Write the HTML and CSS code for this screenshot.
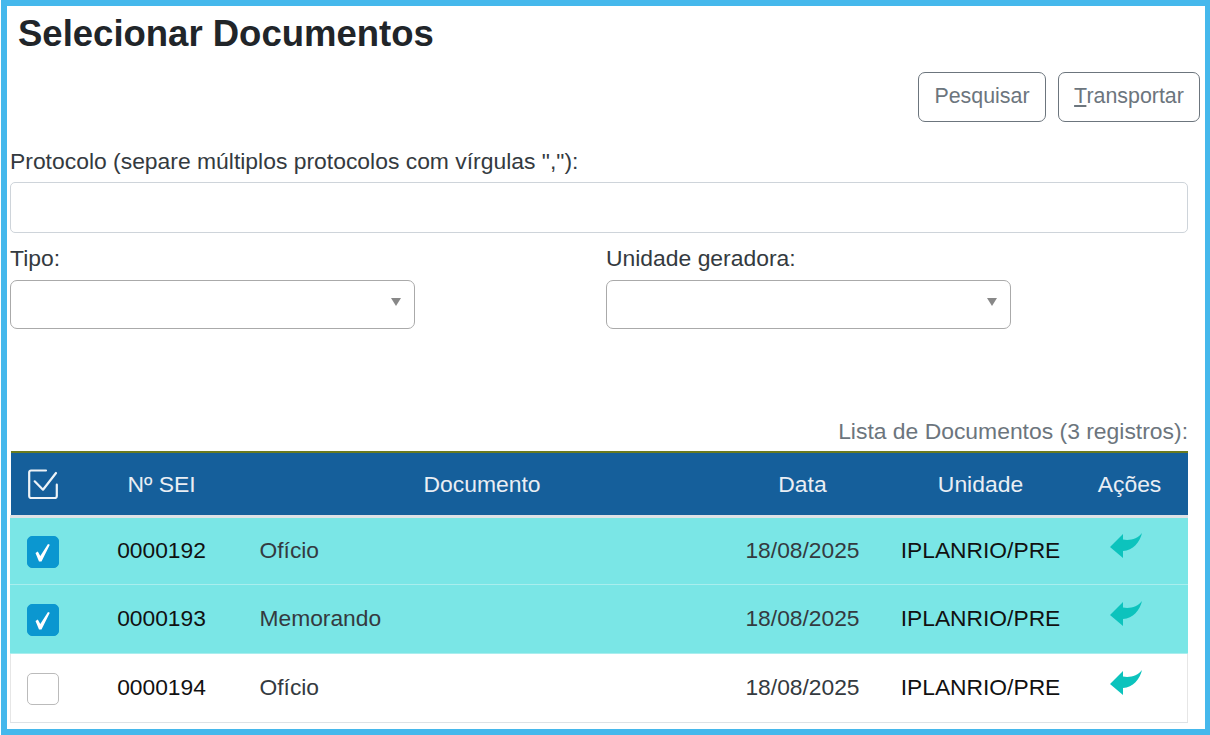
FILE: index.html
```html
<!DOCTYPE html>
<html lang="pt-BR">
<head>
<meta charset="utf-8">
<title>Selecionar Documentos</title>
<link rel="stylesheet" href="styles.css">
</head>
<body>
<svg class="defs" width="0" height="0" aria-hidden="true">
  <symbol id="arrow" viewBox="0 0 32 26"><path d="M0 14 13 1v5.500c7 1.500 15-1 19-6.500-2 9-9 17.500-19 18V25z"/></symbol>
  <symbol id="tick" viewBox="0 0 32 32"><path d="M8.500 17l2.300-1.500 2.500 4.500L21 8l1.800.8L14.500 25.500H12z"/></symbol>
</svg>
<main class="frame">
  <h1 class="title">Selecionar Documentos</h1>
  <div class="actions">
    <button class="btn" type="button">Pesquisar</button>
    <button class="btn btn-wide" type="button"><u>T</u>ransportar</button>
  </div>
  <label class="label label-proto" for="proto">Protocolo (separe múltiplos protocolos com vírgulas ","):</label>
  <input class="input" id="proto" type="text">
  <div class="filters">
    <div class="filter">
      <div class="label">Tipo:</div>
      <div class="select"><span class="caret"></span></div>
    </div>
    <div class="filter">
      <div class="label">Unidade geradora:</div>
      <div class="select"><span class="caret"></span></div>
    </div>
  </div>
  <div class="caption">Lista de Documentos (3 registros):</div>
  <table class="table">
    <colgroup>
      <col class="c1"><col class="c2"><col class="c3"><col class="c4"><col class="c5"><col class="c6">
    </colgroup>
    <thead>
      <tr>
        <th><svg class="all" viewBox="0 0 30 30" fill="none" stroke="#eef3f7" stroke-width="2.200" stroke-linecap="round" stroke-linejoin="round"><path d="M18 1.500H3A1.800 1.800 0 0 0 1.200 3.300v24A1.800 1.800 0 0 0 3 29h24a1.800 1.800 0 0 0 1.800-1.700V15.700"/><path d="M6.700 12.300 15 20.700 28 4"/></svg></th>
        <th>Nº SEI</th><th>Documento</th><th>Data</th><th>Unidade</th><th>Ações</th>
      </tr>
    </thead>
    <tbody>
      <tr class="sel">
        <td class="ctr"><span class="box on"><svg class="tick"><use href="#tick"/></svg></span></td>
        <td class="ctr num">0000192</td><td class="doc">Ofício</td><td class="ctr date">18/08/2025</td><td class="ctr unit">IPLANRIO/PRE</td>
        <td class="ctr act"><svg class="arrow"><use href="#arrow"/></svg></td>
      </tr>
      <tr class="sel">
        <td class="ctr"><span class="box on"><svg class="tick"><use href="#tick"/></svg></span></td>
        <td class="ctr num">0000193</td><td class="doc">Memorando</td><td class="ctr date">18/08/2025</td><td class="ctr unit">IPLANRIO/PRE</td>
        <td class="ctr act"><svg class="arrow"><use href="#arrow"/></svg></td>
      </tr>
      <tr class="plain">
        <td class="ctr"><span class="box"></span></td>
        <td class="ctr num">0000194</td><td class="doc">Ofício</td><td class="ctr date">18/08/2025</td><td class="ctr unit">IPLANRIO/PRE</td>
        <td class="ctr act"><svg class="arrow"><use href="#arrow"/></svg></td>
      </tr>
    </tbody>
  </table>
</main>
</body>
</html>
```
FILE: styles.css
```css
* { box-sizing: border-box; }
html, body { margin: 0; padding: 0; background: #fff; }
body { width: 1210px; height: 735px; overflow: hidden; padding-left: 1px; font-family: "Liberation Sans", Arial, sans-serif; color: #212529; }
.defs { position: absolute; }
.frame { width: 1209px; height: 735px; border: 6px solid #45b8ec; border-width: 6px 5px 6px 6px; padding: 0 0 0 3px; display: flow-root; }
.title { margin: 8px 0 0 8px; font-size: 36.500px; line-height: 40px; font-weight: 700; color: #212529; }
.actions { display: flex; justify-content: flex-end; gap: 12px; margin-top: 18px; margin-right: 5px; }
.btn { height: 50px; width: 128px; background: #fff; border: 1px solid #6c757d; border-radius: 7px; font: 21.400px "Liberation Sans", Arial, sans-serif; color: #6c757d; padding: 0 0 2px; }
.btn-wide { width: 142px; }
.label { display: block; font-size: 22.900px; line-height: 28px; color: #343a40; }
.label-proto { margin: 25px 0 0 0; }
.input { display: block; width: 1178px; height: 51px; margin-top: 7px; border: 1px solid #ced4da; border-radius: 5px; background: #fff; }
.filters { display: flex; margin-top: 11px; }
.filter { width: 596px; }
.select { position: relative; width: 405px; height: 49px; margin-top: 8px; border: 1px solid #aaa; border-radius: 7px; background: #fff; }
.caret { position: absolute; right: 13px; top: 17px; width: 0; height: 0; border: 5px solid transparent; border-top: 8px solid #888; border-bottom: 0; }
.caption { margin-top: 88px; width: 1178px; text-align: right; font-size: 22.900px; line-height: 28px; color: #6c757d; }
.table { width: 1177px; margin-top: 6px; table-layout: fixed; border-collapse: collapse; border-top: 2px solid #6b7b1f; font-size: 22.800px; }
.c1 { width: 64px; } .c2 { width: 174px; } .c3 { width: 467px; } .c4 { width: 174px; } .c5 { width: 182px; } .c6 { width: 116px; }
thead tr { background: #155f9b; height: 64px; border-top: 1px solid #fff; border-bottom: 3px solid #dee2e6; }
th { color: #e9eef4; font-weight: 400; font-size: 22.900px; padding: 2px 0 0; text-align: center; vertical-align: middle; }
td { padding: 0; height: 68.500px; vertical-align: middle; }
.plain td { height: 69.500px; }
tbody tr { border-bottom: 1px solid #dee2e6; border-left: 1px solid #e6e6e6; border-right: 1px solid #e6e6e6; }
tbody tr.sel { background: #7ae6e6; border-color: #a9eeee; border-left-color: #7ae6e6; border-right-color: #7ae6e6; }
.ctr { text-align: center; }
.doc { padding-left: 11px; color: #343a40; }
.num, .unit { color: #111; }
.date { color: #343a40; }
.box { display: block; width: 32px; height: 32px; margin: 3px auto 0; border: 1px solid #bbb; border-radius: 5px; background: #fff; }
.box.on { background: #0b97d0; border-color: #0b97d0; }
.tick { display: block; width: 32px; height: 32px; margin: -1px; fill: #fff; }
.all { width: 30px; height: 30px; display: block; margin: -2px auto 0; }
.act { padding-right: 7px; }
.arrow { width: 32px; height: 26px; fill: #0cc3bd; display: block; margin: -10px auto 0; }
```
